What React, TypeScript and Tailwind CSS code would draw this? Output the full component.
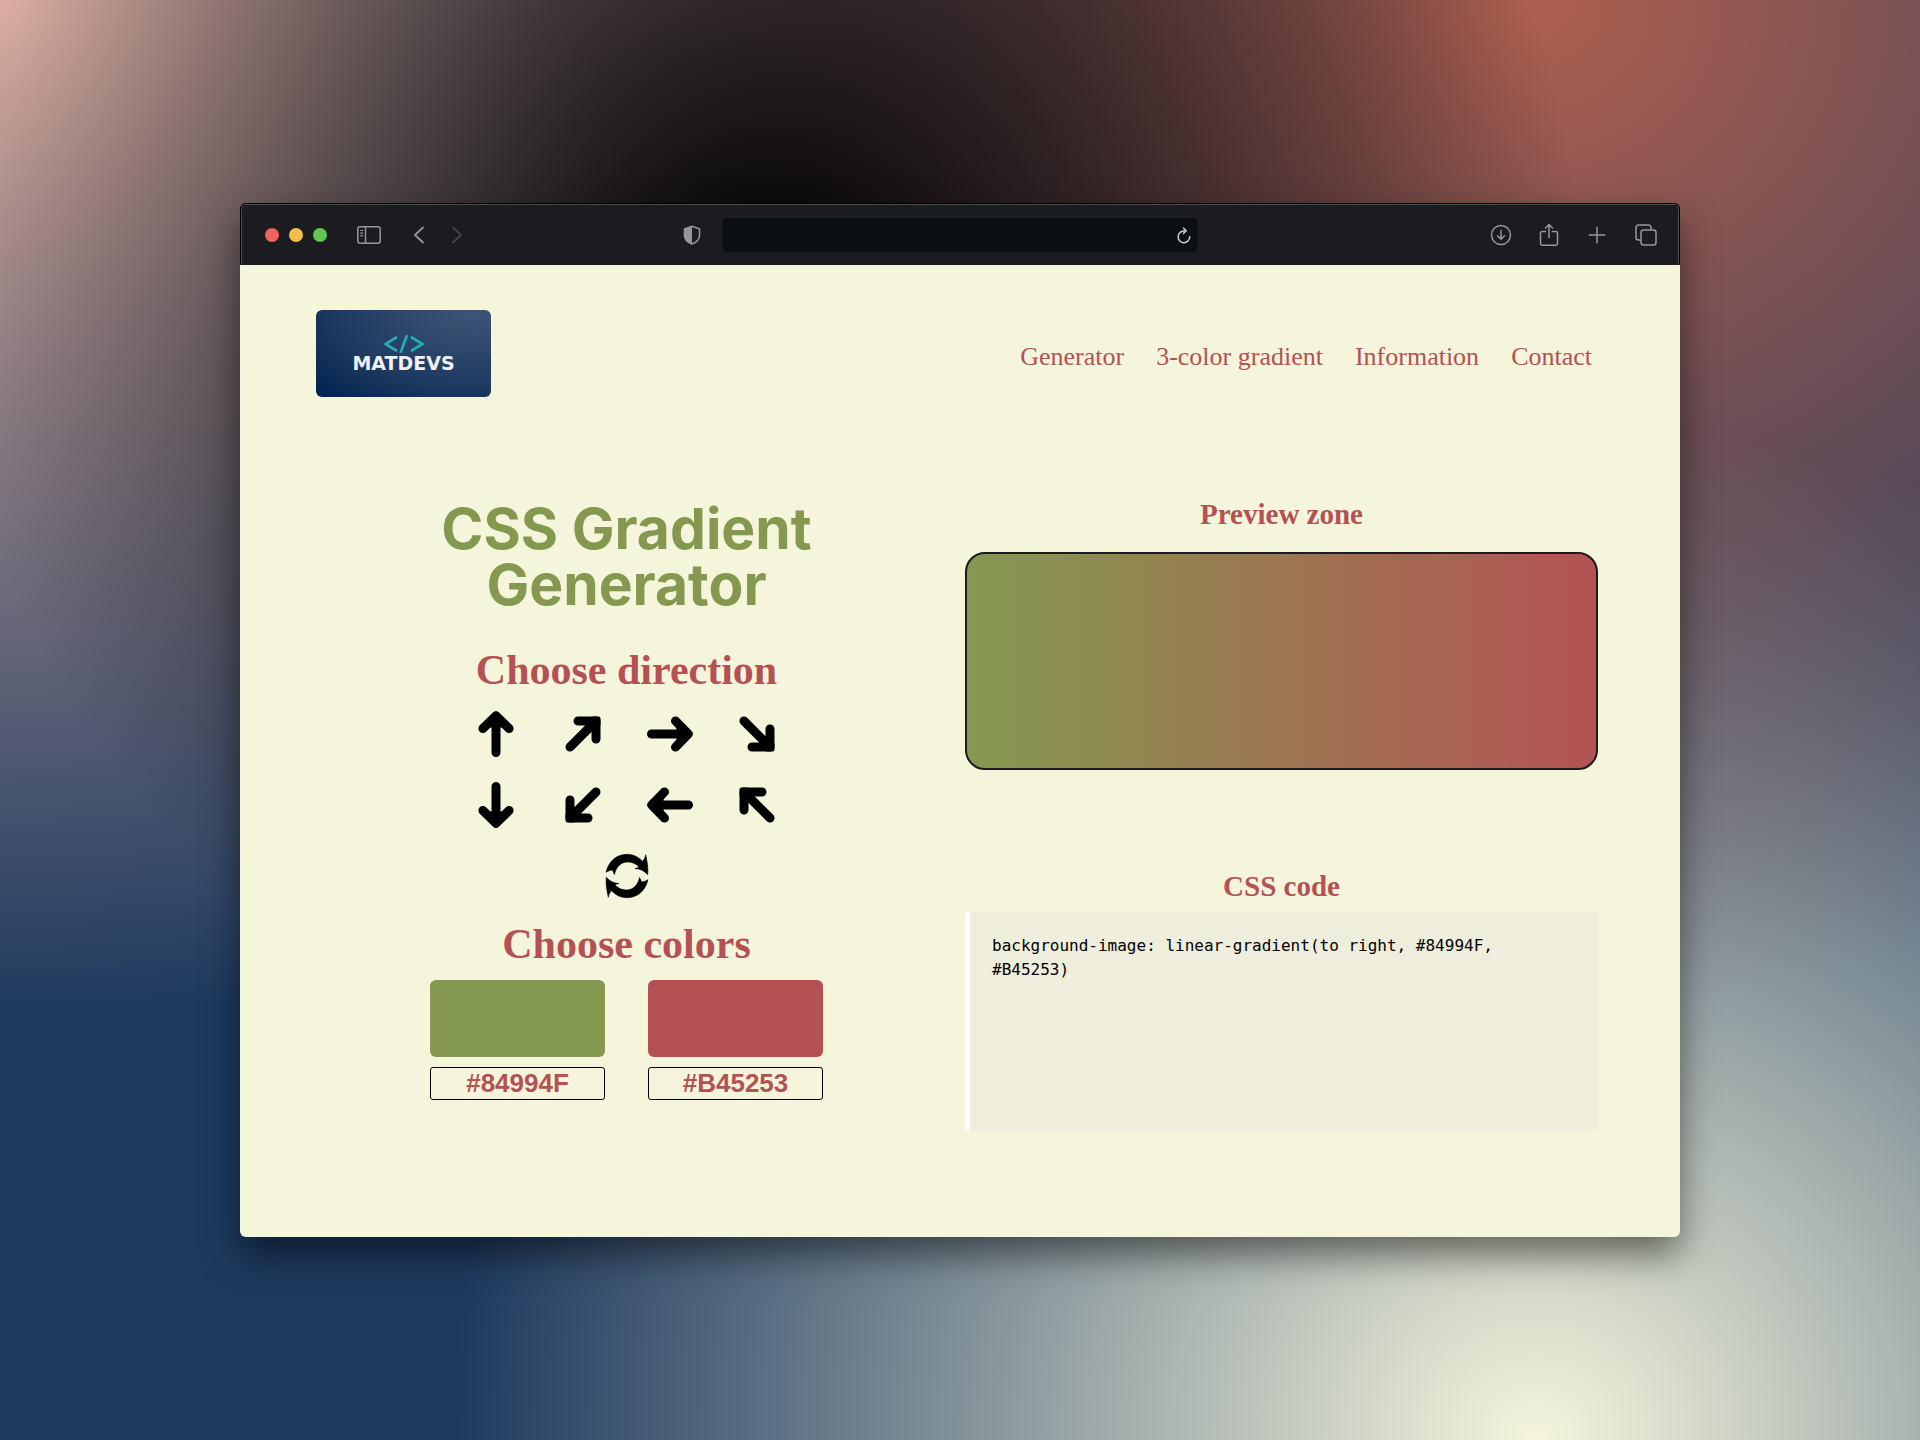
import { useState } from 'react';

const navLinks = ['Generator', '3-color gradient', 'Information', 'Contact'];

type Direction = { value: string; diagonal: boolean; turn: string };

const directions: Direction[] = [
  { value: 'to top', diagonal: false, turn: '' },
  { value: 'to top right', diagonal: true, turn: '' },
  { value: 'to right', diagonal: false, turn: 'rotate-90' },
  { value: 'to bottom right', diagonal: true, turn: 'rotate-90' },
  { value: 'to bottom', diagonal: false, turn: 'rotate-180' },
  { value: 'to bottom left', diagonal: true, turn: 'rotate-180' },
  { value: 'to left', diagonal: false, turn: '-rotate-90' },
  { value: 'to top left', diagonal: true, turn: '-rotate-90' },
];

function ArrowIcon({ diagonal, turn }: { diagonal: boolean; turn: string }) {
  return (
    <svg
      viewBox="0 0 48 48"
      className={`size-12 ${turn}`}
      fill="none"
      stroke="black"
      strokeWidth="9"
      strokeLinecap="round"
      strokeLinejoin="round"
      aria-hidden="true"
    >
      {diagonal ? (
        <>
          <path d="M11 37L36 12M19 11H37V29" />
          <rect x="32" y="6.5" width="9.5" height="9.5" rx="2" fill="black" stroke="none" />
          <path d="M26 13H35V22Z" fill="black" strokeWidth="3" />
        </>
      ) : (
        <>
          <path d="M24 42.5V6M10.900 18.500L24 5.800L37.100 18.500" />
          <path d="M18 16L24 10L30 16Z" fill="black" strokeWidth="3" />
        </>
      )}
    </svg>
  );
}

function RefreshIcon() {
  const half =
    'M0 18.300C3 6.500 11 .3 21.300 .3C27 .3 32 2.700 36.500 7.200C38.300 5.400 39.300 3.500 39.700 .7C41 7 42.500 14 41.700 20.700C38.500 16.800 34 14.800 29 14.500C30.600 14.300 31.900 13.700 33 12.900C30 9.700 26 8 21.300 8C15 8 10 13 8.500 20.500C7.500 18.700 7 17.500 6.500 16C4 16.300 2 17 0 18.300Z';
  return (
    <svg viewBox="-3 -2 48 48" className="size-12" fill="black" stroke="black" strokeWidth="0.6" aria-hidden="true">
      <path d={half} />
      <path d={half} transform="rotate(180 21 22)" />
    </svg>
  );
}

const barButton = 'flex items-center justify-center text-[#96979b]';

function BrowserBar() {
  return (
    <header className="grid h-[62px] grid-cols-[1fr_33%_1fr] items-center rounded-t-md border border-b-0 border-black bg-[#1b1c20] shadow-[inset_0_1px_#4a4d4f,inset_1px_0_#4a4d4f,inset_-1px_0_#4a4d4f]">
      <div className="flex items-center pl-6 pr-[22px]">
        <div className="flex gap-[10px]">
          <span className="size-[14px] rounded-full bg-[#f0645b]" />
          <span className="size-[14px] rounded-full bg-[#f4bd4c]" />
          <span className="size-[14px] rounded-full bg-[#5fc850]" />
        </div>
        <button type="button" aria-label="Toggle sidebar" className={`${barButton} ml-[30px]`}>
          <svg width="24" height="18" viewBox="0 0 24 18" fill="none" stroke="currentColor" strokeWidth="1.500">
            <rect x=".8" y=".8" width="22.400" height="16.400" rx="2.200" />
            <path d="M8.500 1V17" />
            <path d="M3.200 4.500H6M3.200 7.200H6M3.200 9.900H6" strokeWidth="1.200" />
          </svg>
        </button>
        <button type="button" aria-label="Back" className={`${barButton} ml-8`}>
          <svg width="12" height="18" viewBox="0 0 12 18" fill="none" stroke="currentColor" strokeWidth="1.800" strokeLinecap="round" strokeLinejoin="round">
            <path d="M10 1.500L2 9L10 16.500" />
          </svg>
        </button>
        <button type="button" aria-label="Forward" className="ml-[26px] flex items-center justify-center text-[#45464a]">
          <svg width="12" height="18" viewBox="0 0 12 18" fill="none" stroke="currentColor" strokeWidth="1.800" strokeLinecap="round" strokeLinejoin="round">
            <path d="M2 1.500L10 9L2 16.500" />
          </svg>
        </button>
        <button type="button" aria-label="Privacy report" className={`${barButton} ml-auto`}>
          <svg width="18" height="20" viewBox="0 0 18 20">
            <path d="M9 1.200L16.500 4V10.500C16.500 14.500 13 17.500 9 19C5 17.500 1.500 14.500 1.500 10.500V4Z" fill="none" stroke="currentColor" strokeWidth="1.600" strokeLinejoin="round" />
            <path d="M9 1.200V19C5 17.500 1.500 14.500 1.500 10.500V4Z" fill="currentColor" />
          </svg>
        </button>
      </div>
      <div className="flex h-[34px] items-center rounded bg-[#0a0f12] pr-[6px]">
        <input type="text" aria-label="Address" className="min-w-0 flex-1 bg-transparent px-3 text-sm text-[#c9cacc] outline-none" />
        <button type="button" aria-label="Reload" className="text-[#cdced0]">
          <svg width="14" height="18" viewBox="0 0 14 18" fill="none" stroke="currentColor" strokeWidth="1.500" strokeLinecap="round" strokeLinejoin="round">
            <path d="M12.700 10.800A5.800 5.800 0 1 1 8 5.200" />
            <path d="M6.500 2L9.200 4.700L6.500 7.400" />
          </svg>
        </button>
      </div>
      <div className="flex items-center justify-end gap-[26px] pr-[21px]">
        <button type="button" aria-label="Downloads" className={barButton}>
          <svg width="22" height="22" viewBox="0 0 22 22" fill="none" stroke="currentColor" strokeWidth="1.500" strokeLinecap="round" strokeLinejoin="round">
            <circle cx="11" cy="11" r="9.500" />
            <path d="M11 6.500V15M7.500 11.700L11 15.200L14.500 11.700" />
          </svg>
        </button>
        <button type="button" aria-label="Share" className={barButton}>
          <svg width="22" height="24" viewBox="0 0 22 24" fill="none" stroke="currentColor" strokeWidth="1.500" strokeLinecap="round" strokeLinejoin="round">
            <path d="M7.500 8.500H4.200A1.700 1.700 0 0 0 2.500 10.200V20.500A1.700 1.700 0 0 0 4.200 22.200H17.800A1.700 1.700 0 0 0 19.500 20.500V10.200A1.700 1.700 0 0 0 17.800 8.500H14.500" />
            <path d="M11 14.500V1.800M7.500 5L11 1.600L14.500 5" />
          </svg>
        </button>
        <button type="button" aria-label="New tab" className={barButton}>
          <svg width="22" height="22" viewBox="0 0 22 22" fill="none" stroke="currentColor" strokeWidth="1.500" strokeLinecap="round">
            <path d="M11 3.300V18.700M3.300 11H18.700" />
          </svg>
        </button>
        <button type="button" aria-label="Show tabs" className={barButton}>
          <svg width="24" height="22" viewBox="0 0 24 22" fill="none" stroke="currentColor" strokeWidth="1.500" strokeLinejoin="round">
            <rect x="7" y="6" width="15" height="15" rx="2.500" />
            <path d="M7 16H4.500A2.500 2.500 0 0 1 2 13.500V3.500A2.500 2.500 0 0 1 4.500 1H14.500A2.500 2.500 0 0 1 17 3.500V6" />
          </svg>
        </button>
      </div>
    </header>
  );
}

function Logo() {
  return (
    <a
      href="#home"
      className="flex h-[87px] w-[175px] flex-col items-center justify-center rounded-md bg-[radial-gradient(at_90%_0%,#3f5577_0%,#1f3b61_60%,#00214f_100%)]"
    >
      <svg width="42" height="18" viewBox="0 0 42 18" fill="none" stroke="#22aeb0" strokeWidth="2.700" aria-hidden="true">
        <path d="M14 2L2.500 9L14 16M28 2L39.500 9L28 16M24 0L17.500 18" />
      </svg>
      <span className="font-['DejaVu_Sans'] text-[19px] leading-5 font-bold text-[#eef2f8]">MATDEVS</span>
    </a>
  );
}

type ColorFieldProps = { label: string; value: string; onChange: (value: string) => void };

function ColorField({ label, value, onChange }: ColorFieldProps) {
  return (
    <div className="flex w-[175px] flex-col gap-[10px]">
      <input
        type="color"
        aria-label={`${label} picker`}
        value={value.toLowerCase()}
        onChange={(e) => onChange(e.target.value.toUpperCase())}
        className="h-[77px] w-full cursor-pointer appearance-none overflow-hidden rounded-md border-0 p-0 [&::-webkit-color-swatch]:border-0 [&::-webkit-color-swatch-wrapper]:p-0"
      />
      <input
        type="text"
        aria-label={`${label} hex value`}
        value={value}
        onChange={(e) => onChange(e.target.value)}
        className="h-[33px] w-full rounded-[3px] border border-black bg-transparent text-center font-['Liberation_Sans',sans-serif] text-[26px] leading-none font-bold text-[#b45253]"
      />
    </div>
  );
}

export default function App() {
  const [direction, setDirection] = useState('to right');
  const [from, setFrom] = useState('#84994F');
  const [to, setTo] = useState('#B45253');
  const shape = direction === 'circle' ? 'radial-gradient' : 'linear-gradient';
  const gradient = `${shape}(${direction}, ${from}, ${to})`;

  return (
    <div className="flex min-h-screen items-center justify-center bg-[#1d3a5f] bg-[radial-gradient(at_40%_20%,#000000_0%,transparent_50%),radial-gradient(at_80%_0%,#ae5f4e_0%,transparent_50%),radial-gradient(at_80%_100%,#f5f5dc_0%,transparent_50%),radial-gradient(at_0%_0%,#dcaea1_0%,transparent_50%)]">
      <div className="w-3/4 rounded-md shadow-[0_18px_36px_rgba(0,0,0,0.5)]">
        <BrowserBar />
        <div className="rounded-b-md bg-[#f5f5dc] pr-[82px] pb-[106px] pl-[70px] font-['Liberation_Serif',serif] text-[#b45253]">
          <div className="flex items-center justify-between px-[6px] pt-[45px]">
            <Logo />
            <nav className="flex gap-8 pt-[6px] text-[26px] leading-8">
              {navLinks.map((link) => (
                <a key={link} href={`#${link.toLowerCase().replace(' ', '-')}`}>
                  {link}
                </a>
              ))}
            </nav>
          </div>

          <main className="grid grid-cols-2 gap-[22px] pt-[101px]">
            <section className="flex flex-col items-center pt-[3px]">
              <h1 className="max-w-[440px] text-center font-['Inter',sans-serif] text-[57px] leading-[56px] font-bold text-[#84994f]">
                CSS Gradient Generator
              </h1>
              <h2 className="mt-[33px] text-[42px] leading-[48px] font-bold">Choose direction</h2>
              <div className="mt-4 flex flex-col items-center gap-[23px]">
                <div className="grid grid-cols-4 gap-x-[39px] gap-y-[23px]">
                  {directions.map((d) => (
                    <button key={d.value} type="button" aria-label={d.value} onClick={() => setDirection(d.value)}>
                      <ArrowIcon diagonal={d.diagonal} turn={d.turn} />
                    </button>
                  ))}
                </div>
                <button type="button" aria-label="circle" onClick={() => setDirection('circle')}>
                  <RefreshIcon />
                </button>
              </div>
              <h2 className="mt-5 text-[42px] leading-[48px] font-bold">Choose colors</h2>
              <div className="mt-3 flex gap-[43px]">
                <ColorField label="First color" value={from} onChange={setFrom} />
                <ColorField label="Second color" value={to} onChange={setTo} />
              </div>
            </section>

            <section className="flex flex-col items-center">
              <h3 className="text-[29px] leading-8 font-bold">Preview zone</h3>
              <div
                className="mt-[22px] h-[218px] w-full rounded-[20px] border-2 border-[#1c1c1c]"
                style={{ backgroundImage: gradient }}
              />
              <h3 className="mt-[100px] text-[29px] leading-8 font-bold">CSS code</h3>
              <pre className="mt-[10px] h-[219px] w-full rounded-[3px] border-l-[5px] border-white bg-[#efeddb] px-[22px] py-[22px] text-base leading-6 whitespace-pre-wrap text-black">
                <code className="block font-['DejaVu_Sans_Mono',monospace]">{`background-image: ${gradient}`}</code>
              </pre>
            </section>
          </main>
        </div>
      </div>
    </div>
  );
}
